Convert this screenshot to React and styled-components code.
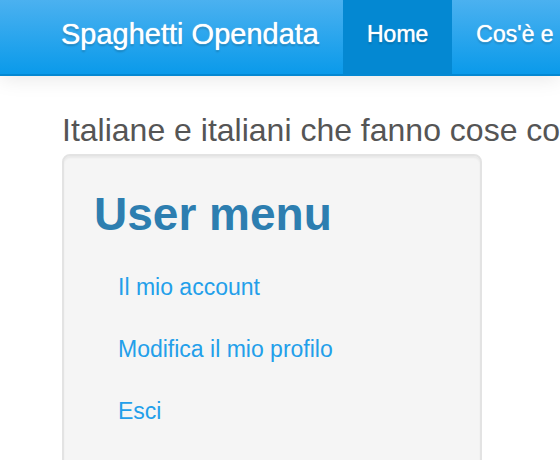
import React from "react";
import styled, { createGlobalStyle } from "styled-components";

const GlobalStyle = createGlobalStyle`
  * { box-sizing: border-box; }
  body {
    margin: 0;
    background: #fff;
    color: #555;
    font-family: "Liberation Sans", Arial, sans-serif;
    overflow-x: hidden;
  }
`;

const Navbar = styled.header`
  display: flex;
  padding-left: 37px;
  background: linear-gradient(#4bb1f0, #0a9aea);
  border-bottom: 2px solid #0488d2;
  box-shadow: 0 2px 20px rgba(0, 0, 0, 0.1);
  white-space: nowrap;
`;

const Brand = styled.a`
  padding: 0 24px;
  color: #fff;
  font-size: 29px;
  line-height: 68px;
  text-decoration: none;
  text-shadow: 0 0 1px #fff, 0 2px 2px rgba(0, 0, 0, 0.2);
`;

const NavLinks = styled.nav`
  display: flex;
`;

const NavLink = styled.a`
  padding: 0 24px 6px;
  background: ${(p) => (p.$active ? "#0488d2" : "transparent")};
  color: #fff;
  font-size: 23px;
  line-height: 68px;
  text-decoration: none;
  text-shadow: 0 0 1px #fff, 0 2px 2px rgba(0, 0, 0, 0.2);
`;

const Page = styled.main`
  padding: 34px 0 0 62px;
`;

const Slogan = styled.p`
  margin: 0 0 4px;
  font-size: 32px;
  line-height: 40px;
  white-space: nowrap;
`;

const Well = styled.aside`
  max-width: 420px;
  padding: 28px 30px;
  background: #f5f5f5;
  border: 2px solid #e3e3e3;
  border-radius: 8px;
  box-shadow: inset 0 2px 2px rgba(0, 0, 0, 0.05);
`;

const Title = styled.h2`
  margin: 0 0 12px;
  color: #2d7eb0;
  font-size: 46px;
  line-height: 60px;
`;

const Menu = styled.ul`
  margin: 0;
  padding: 0 24px;
  list-style: none;
`;

const MenuLink = styled.a`
  display: block;
  color: #239fea;
  font-size: 23px;
  line-height: 62px;
  text-decoration: none;
`;

const menuItems = ["Il mio account", "Modifica il mio profilo", "Esci"];

export default function App() {
  return (
    <>
      <GlobalStyle />
      <Navbar>
        <Brand href="#">Spaghetti Opendata</Brand>
        <NavLinks>
          <NavLink href="#" $active aria-current="page">Home</NavLink>
          <NavLink href="#">Cos'è e</NavLink>
        </NavLinks>
      </Navbar>
      <Page>
        <Slogan>Italiane e italiani che fanno cose co</Slogan>
        <Well>
          <Title>User menu</Title>
          <Menu>
            {menuItems.map((label) => (
              <li key={label}><MenuLink href="#">{label}</MenuLink></li>
            ))}
          </Menu>
        </Well>
      </Page>
    </>
  );
}
